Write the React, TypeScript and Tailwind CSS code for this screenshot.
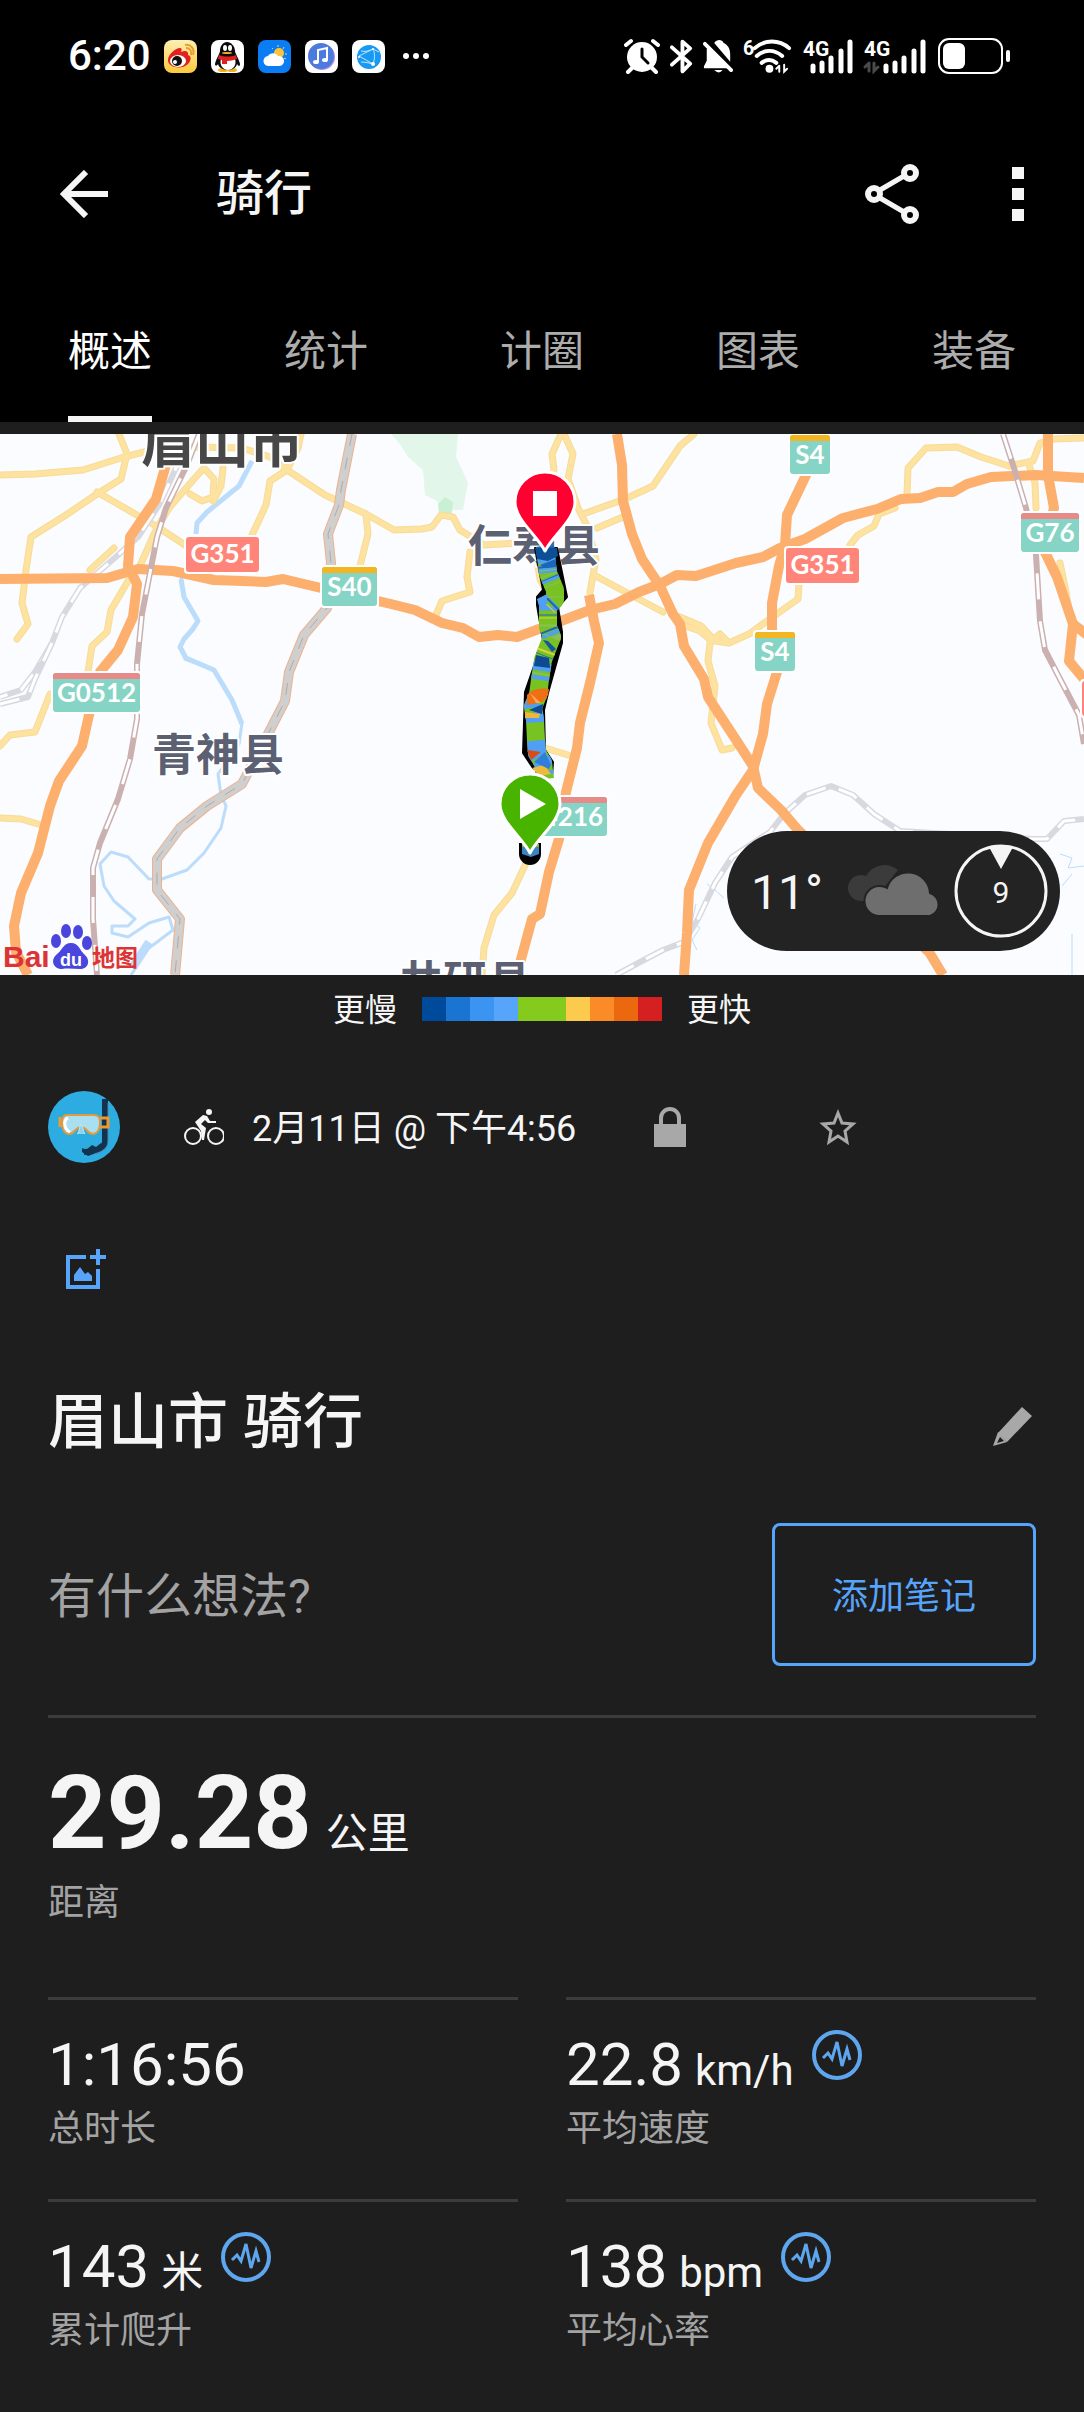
import { useState } from "react";

interface Stat {
  value: string;
  unit?: string;
  label: string;
  chart?: boolean;
}

interface Shield {
  x: number;
  y: number;
  w: number;
  text: string;
  kind: "national" | "expressway" | "provincial";
}

const FONT = "font-[Roboto,'Noto_Sans_CJK_SC',sans-serif]";

const tabs = ["概述", "统计", "计圈", "图表", "装备"];

const stats: Stat[] = [
  { value: "1:16:56", label: "总时长" },
  { value: "22.8", unit: "km/h", label: "平均速度", chart: true },
  { value: "143", unit: "米", label: "累计爬升", chart: true },
  { value: "138", unit: "bpm", label: "平均心率", chart: true },
];

// slow -> fast
const speedColors = [
  "bg-[#004a9c]",
  "bg-[#1a74d2]",
  "bg-[#3b93f2]",
  "bg-[#57a5fb]",
  "bg-[#84cb1e]",
  "bg-[#84cb1e]",
  "bg-[#fcca4c]",
  "bg-[#fb8b26]",
  "bg-[#ec680e]",
  "bg-[#d42020]",
];

/* ---------- Map data ---------- */

const highways = [
  "0,145 107,144 138,135 173,137 214,146 266,148 283,145 321,154 391,170 415,176 442,189 463,194 479,203 498,201 517,203 539,195 561,187 590,176 615,170 639,158 660,150 677,141 696,142 736,129 763,123 780,114 805,105 843,84 877,75 901,65 920,64 938,58 953,58 967,50 991,43 1036,41 1084,44",
  "170,0 165,34 156,65 130,103 128,132 137,150 133,183 118,216 100,238 89,281 82,312 59,347 50,372 38,419 21,459 14,492 16,518 28,541",
  "589,161 594,187 599,209 590,249 580,289 577,314 566,358 559,405 549,438 540,480 532,485 520,529 518,541",
  "617,0 622,31 623,67 632,100 642,125 660,152 673,180 680,190 684,212 704,245 708,263 725,289 753,332 758,354 781,376 798,396 929,518 943,541",
  "815,20 806,41 787,81 785,111 779,132 772,169 772,194 777,238 767,270 763,300 753,336 736,361 708,409 689,456 687,499 684,541",
  "1048,0 1048,41 1054,74 1043,114 1057,143 1073,190 1069,227 1084,245",
  "1073,190 1090,203",
];

const localRoads = [
  "0,41 35,40 83,36 124,23 156,15 194,13 242,14 270,23 287,36 325,61 366,80 394,96 422,95 432,93 441,81 453,83 460,96 484,111 519,109",
  "119,0 127,20 121,45 97,60 66,81 31,103 26,136 22,169 28,190 17,205",
  "97,58 156,92 185,111",
  "138,136 156,96 169,74 194,45 204,34 214,45 213,63 202,67 190,60",
  "223,34 221,52 213,67",
  "301,0 298,14 287,36 270,47 266,71 252,101",
  "366,81 368,100 360,132",
  "470,118 467,143 470,158 442,167 436,181",
  "128,147 111,176 107,198 92,212 88,238",
  "114,114 90,136",
  "50,260 35,298 10,301 0,312",
  "0,384 21,385 38,390",
  "528,425 512,459 494,481 484,514 482,541",
  "694,0 680,12 653,52 625,65 583,80",
  "623,83 597,94",
  "565,2 573,20 568,45 578,74 587,92 596,125 590,158",
  "561,0 552,20 554,36 545,60",
  "536,120 540,145 548,160",
  "594,141 618,154 663,178",
  "680,183 701,192 715,207 729,209 749,200 767,187 798,165 799,150",
  "680,190 700,197 712,207 720,200 727,207",
  "710,209 708,227 715,252 711,289 722,316 732,314",
  "850,111 858,101 874,92 879,80 895,74",
  "907,60 908,34 926,14 957,13 981,23 1009,32 1033,27 1040,9 1054,5 1084,4",
  "1029,31 1035,49 1036,74",
  "1060,129 1066,158 1071,187",
  "545,314 568,321",
];

const river =
  "181,140 183,161 197,187 180,212 185,225 214,236 232,267 242,289 239,310 218,340 221,361 226,372 221,394 204,419 187,436 162,445 149,445 128,423 111,418 100,430 104,452 114,467 135,485 128,492 112,492 112,499 128,503 149,489 169,483 173,496 149,514 131,541";

const provincialRoad =
  "352,0 341,56 339,71 328,100 331,129 327,174 304,201 289,238 285,267 268,300 242,350 207,372 180,394 157,425 157,456 180,485 175,541";

const railways = [
  "199,0 187,31 166,74 157,103 142,180 137,230 137,285 130,325 118,365 100,409 93,434 93,485 97,541",
  "1003,0 1014,34 1026,74 1036,121 1040,187 1045,216 1060,245 1079,281 1084,310",
];

const greyRailways = [
  "182,18 176,34 159,71 138,103 118,121 80,154 62,183 52,209 35,238 21,256 0,263",
  "52,209 35,245 28,263 0,270",
  "616,541 642,527 663,516 684,508 698,485 715,449 732,423 770,398 784,380 805,361 831,352 853,361 874,380 900,397 1033,405 1047,405 1064,387 1084,385",
];

const shields: Shield[] = [
  { x: 186, y: 103, w: 73, text: "G351", kind: "national" },
  { x: 322, y: 133, w: 55, text: "S40", kind: "provincial" },
  { x: 53, y: 239, w: 87, text: "G0512", kind: "expressway" },
  { x: 790, y: 1, w: 40, text: "S4", kind: "provincial" },
  { x: 786, y: 114, w: 73, text: "G351", kind: "national" },
  { x: 755, y: 198, w: 40, text: "S4", kind: "provincial" },
  { x: 1021, y: 79, w: 58, text: "G76", kind: "expressway" },
  { x: 520, y: 363, w: 87, text: "G4216", kind: "expressway" },
  { x: 1082, y: 247, w: 73, text: "", kind: "national" },
];

const places = [
  { x: 141, y: 29, size: 54, text: "眉山市", fill: "#474747" },
  { x: 152, y: 337, size: 44, text: "青神县", fill: "#5b6173" },
  { x: 468, y: 128, size: 44, text: "仁寿县", fill: "#5b6173" },
  { x: 399, y: 564, size: 44, text: "井研县", fill: "#5b6173" },
];

const track =
  "545,112 548,139 555,156 555,166 548,173 548,193 552,203 548,213 543,226 540,246 538,261 533,273 535,286 536,306 537,319 543,329 545,345";

// Pace layers painted one over another along the track
const paceLayers = [
  { color: "#78c222", dash: "none" },
  { color: "#4f9ff5", dash: "17 3 7 5 4 22 3 3 5 22 4 29 8 5 4 23 6 5 10 18" },
  { color: "#1c66b8", dash: "12 8 2 10 1 26 2 12 1 14 2 26 1 200" },
  { color: "#8abf5a", dash: "0 24 1 4 1 9 1 12 1 30 2 11 1 37 2 19 2 100" },
  { color: "#e3cf3f", dash: "0 64 1 11 1 34 2 300" },
];

const pacePatches = [
  { d: "M535 114 L557 114 L558 122 L548 127 L537 125Z", color: "#0d4f97" },
  { d: "M540 131 L556 125 L556 133 L545 134Z", color: "#1b66b5" },
  { d: "M537 165 L547 160 L547 170 L539 172Z", color: "#4f9ff5" },
  { d: "M543 206 L548 207 L556 215 L552 218Z", color: "#14569f" },
  { d: "M536 221 L549 224 L550 234 L534 232Z", color: "#0e4a93" },
  { d: "M527 261 Q534 253 549 255 L548 261 Q544 268 539 269 L527 271Z", color: "#ee6f14" },
  { d: "M530 259 L541 269 L536 269Z", color: "#fbaa4a" },
  { d: "M543 270 L542 280 L529 276Z", color: "#0f4c94" },
  { d: "M525 278 L540 280 L539 284 L525 284Z", color: "#f2b53a" },
  { d: "M527 316 L541 318 L531 326Z", color: "#dd4a12" },
  { d: "M532 334 L544 331 L551 340 L540 342Z", color: "#eeb93c" },
  { d: "M534 328 L545 318 L551 331 L549 335Z", color: "#2f7fd8" },
];

function RoadShield({ x, y, w, text, kind }: Shield) {
  const national = kind === "national";
  const h = national ? 35 : 39;
  return (
    <g>
      <rect x={x - 2} y={y - 2} width={w + 4} height={h + 4} rx="4" fill="#fff" />
      <rect x={x} y={y} width={w} height={h} rx="3" fill={national ? "#ff857a" : "#86d4c5"} />
      {!national && (
        <path
          d={`M${x} ${y + 6}v-3q0-3 3-3h${w - 6}q3 0 3 3v3z`}
          fill={kind === "provincial" ? "#f4b523" : "#e78b88"}
        />
      )}
      <text
        x={x + w / 2}
        y={national ? y + 26 : y + 29}
        textAnchor="middle"
        fontSize="26"
        fontWeight="700"
        fontFamily="Lato, sans-serif"
        fill="#fff"
      >
        {text}
      </text>
    </g>
  );
}

function RouteMap() {
  return (
    <svg
      viewBox="0 0 1084 541"
      preserveAspectRatio="xMidYMid slice"
      className="w-full h-[541px] bg-[#fbfcff]"
      role="img"
      aria-label="路线地图"
      strokeLinejoin="round"
      fill="none"
    >
      <path
        d="M391 0 400 10 408 23 423 36 425 61 437 67 441 76 463 76 468 49 463 38 456 23 458 0Z"
        fill="#e2f6e9"
      />
      <path d="M438 70 445 63 453 68 452 79 439 80Z" fill="#c9f0d4" />

      <g stroke="#bbdcfb">
        <polyline points="252,27 239,52 207,78 197,89 196,100" strokeWidth="5" />
        <polyline points={river} strokeWidth="3" />
        <path d="M181 145l3 18 14 24-5 8-9 10-4 8 6 11 28 12 18 30 10 24" strokeWidth="5" />
        <path d="M149 508l-17 26" strokeWidth="8" />
        <path d="M707 450l8 6 9 8M696 470l-4 18 8 6-8 12 5 10M1060 420l12 4-4 10 16-2M1072 440l-10 12M1072 500v41" strokeWidth="1" />
      </g>

      {localRoads.map((points) => (
        <polyline key={points} points={points} stroke="#f7dc98" strokeWidth="7" strokeLinecap="round" />
      ))}
      {localRoads.map((points) => (
        <polyline key={points} points={points} stroke="#fde2a0" strokeWidth="5" strokeLinecap="round" />
      ))}

      {greyRailways.map((points) => (
        <g key={points}>
          <polyline points={points} stroke="#d8d8e0" strokeWidth="6" />
          <polyline points={points} stroke="#fff" strokeWidth="3" strokeDasharray="20 14" />
        </g>
      ))}

      {highways.map((points) => (
        <polyline key={points} points={points} stroke="#fdaf6e" strokeWidth="10" />
      ))}

      {railways.map((points) => (
        <g key={points}>
          <polyline points={points} stroke="#cbb0b0" strokeWidth="6" />
          <polyline points={points} stroke="#fff" strokeWidth="3" strokeDasharray="26 22" />
        </g>
      ))}

      <polyline points={provincialRoad} stroke="#eeb28c" strokeWidth="10" />
      <polyline points={provincialRoad} stroke="#cfcfcf" strokeWidth="8" />
      <polyline points={provincialRoad} stroke="#b5a9a2" strokeWidth="1" strokeDasharray="12 12" />

      {shields.map((shield) => (
        <RoadShield key={`${shield.x}-${shield.y}`} {...shield} />
      ))}

      {places.map((place) => (
        <text
          key={place.text}
          x={place.x}
          y={place.y}
          fontSize={place.size}
          fontWeight="700"
          fontFamily="'Noto Sans CJK SC', sans-serif"
          fill={place.fill}
          stroke="#fff"
          strokeWidth="4"
          paintOrder="stroke"
        >
          {place.text}
        </text>
      ))}

      {/* Recorded track */}
      <path
        d="M535 114 543 156 537 163 537 171 543 206 525 258 523 319 533 334 552 343 553 328 545 316 544 276 548 259 562 209 562 198 558 173 567 163 557 114Z"
        fill="#000"
        stroke="#000"
        strokeWidth="2"
      />
      {paceLayers.map((layer) => (
        <polyline
          key={layer.color}
          points={track}
          stroke={layer.color}
          strokeWidth="18"
          strokeDasharray={layer.dash}
        />
      ))}
      {pacePatches.map((patch) => (
        <path key={patch.d} d={patch.d} fill={patch.color} />
      ))}
      <path d="M519 409h22v11a11 11 0 0 1-22 0z" fill="#000" />
      <path d="M522 410h17v10l-8 3-9-3z" fill="#3a83c4" />
      <path d="M522 410h17v3h-17z" fill="#8cb03a" />

      {/* Finish pin */}
      <path
        d="M545 117C538 102 515 86 515 68a30 30 0 0 1 60 0C575 86 552 102 545 117z"
        fill="#ff0030"
        stroke="#fff"
        strokeWidth="3"
      />
      <rect x="533" y="57" width="24" height="25" fill="#fff" />

      {/* Start pin */}
      <path
        d="M530 419C523 404 500 388 500 370a30 30 0 0 1 60 0C560 388 537 404 530 419z"
        fill="#49b400"
        stroke="#fff"
        strokeWidth="3"
      />
      <path d="M520 355v30l26-15z" fill="#fff" />

      {/* Map provider */}
      <g fontFamily="'Liberation Sans', 'Noto Sans CJK SC', sans-serif" fontWeight="700">
        <text x="3" y="533" fontSize="30" fill="#dc3434">Bai</text>
        <g fill="#4a45dd">
          <ellipse cx="56" cy="507" rx="5" ry="7" />
          <ellipse cx="66" cy="497" rx="5" ry="7" />
          <ellipse cx="78" cy="498" rx="5" ry="7" />
          <ellipse cx="87" cy="509" rx="5" ry="7" />
          <path d="M71 509c8 0 9 8 14 12 6 6 3 14-5 14-6 0-12-1-18 0-8 0-12-8-6-14 6-4 7-12 15-12z" />
        </g>
        <text x="60" y="532" fontSize="18" fill="#fff">du</text>
        <text x="92" y="532" fontSize="23" fill="#dc3434">地图</text>
      </g>
    </svg>
  );
}

function WeatherPill() {
  return (
    <div className="absolute right-6 bottom-6 h-[120px] w-[333px] rounded-full bg-[#232323] flex items-center justify-between pl-6 pr-3 text-[#f5f5f5]">
      <span className="text-5xl pt-1">11°</span>
      <svg width="94" height="54" viewBox="0 0 94 54" className="ml-3" aria-hidden="true">
        <path
          d="M14 37a13 13 0 1 1 5-25A21 21 0 0 1 51 6L40 20 24 37z"
          fill="#3b3b3b"
        />
        <path
          d="M33 52a15 15 0 0 1-1-30 14 14 0 0 1 8 2 22 22 0 0 1 43 5 12 12 0 0 1 0 23z"
          fill="#6e6e6e"
          stroke="#232323"
          strokeWidth="2"
        />
      </svg>
      <svg width="94" height="94" viewBox="0 0 94 94" role="img" aria-label="风速 9">
        <circle cx="47" cy="47" r="45" fill="none" stroke="#f5f5f5" strokeWidth="3" />
        <path d="M35 3h24L47 25z" fill="#f5f5f5" />
        <text x="47" y="59" textAnchor="middle" fontSize="30" fill="#f5f5f5">9</text>
      </svg>
    </div>
  );
}

/* ---------- Status bar ---------- */

function AppIcons() {
  return (
    <div className="flex gap-[14px]" aria-hidden="true">
      <svg width="33" height="33" viewBox="0 0 33 33">
        <defs>
          <linearGradient id="weibo" x1="0" y1="0" x2="0" y2="1">
            <stop offset="0" stopColor="#fdf0b4" />
            <stop offset="1" stopColor="#fdc93a" />
          </linearGradient>
        </defs>
        <rect width="33" height="33" rx="8" fill="url(#weibo)" />
        <path d="M4 20c0-5 7-12 12-12 2 0 2 2 1 4 4-2 8-1 7 3 4 1 3 6 0 9-6 6-20 4-20-4z" fill="#e2201f" />
        <ellipse cx="14" cy="21" rx="8" ry="6" fill="#fff" />
        <circle cx="13" cy="21" r="5" fill="#111" />
        <circle cx="11" cy="22" r="2" fill="#fff" />
        <path d="M22 8c4 0 6 3 5 7M21 5c6-1 10 4 8 10" fill="none" stroke="#e9a12c" strokeWidth="2" />
      </svg>
      <svg width="33" height="33" viewBox="0 0 33 33">
        <rect width="33" height="33" rx="8" fill="#fff" />
        <ellipse cx="12" cy="30" rx="5" ry="2" fill="#f6b01e" />
        <ellipse cx="21" cy="30" rx="5" ry="2" fill="#f6b01e" />
        <path d="M9 11c0-5 3-9 7-9s8 4 8 9c0 2 4 8 5 13 0 3-2 2-3 0-1 4-5 6-9 6s-9-2-10-6c-1 2-3 2-3 0 1-5 5-11 5-13z" fill="#0b0b0b" />
        <path d="M10 19h14c2 6-2 11-7 11s-9-5-7-11z" fill="#fff" />
        <path d="M8 15c5 2 12 2 17 0l1 4c-3 1-7 2-10 2v3h-5v-4l-4-1z" fill="#e2201f" />
        <ellipse cx="14" cy="8" rx="2" ry="3" fill="#fff" />
        <ellipse cx="19" cy="8" rx="2" ry="3" fill="#fff" />
        <ellipse cx="16" cy="13" rx="5" ry="1" fill="#f6b01e" />
      </svg>
      <svg width="33" height="33" viewBox="0 0 33 33">
        <rect width="33" height="33" rx="8" fill="#0a7df5" />
        <circle cx="21" cy="13" r="5" fill="#fcc43a" />
        <path d="M20 5v2M14 8l1 1M26 7l-1 2M27 14h2M26 18l2 1" stroke="#fcd46a" strokeWidth="1" />
        <path d="M11 26a5 5 0 0 1-1-10 6 6 0 0 1 10 0 5 5 0 0 1 2 10z" fill="#fff" />
      </svg>
      <svg width="33" height="33" viewBox="0 0 33 33">
        <rect width="33" height="33" rx="8" fill="#fff" />
        <circle cx="17" cy="17" r="13" fill="#b28be8" />
        <circle cx="16" cy="16" r="13" fill="#4b7bdc" />
        <path d="M13 22V10l9-2v12" fill="none" stroke="#fff" strokeWidth="2" />
        <ellipse cx="11" cy="22" rx="3" ry="2" fill="#fff" />
        <ellipse cx="20" cy="20" rx="3" ry="2" fill="#fff" />
      </svg>
      <svg width="33" height="33" viewBox="0 0 33 33">
        <rect width="33" height="33" rx="8" fill="#fff" />
        <circle cx="17" cy="17" r="12" fill="#1899f3" />
        <path d="M21 9 7 16l14 8M21 9c2 4 2 10 0 15M9 11c4 1 8 0 12-2M9 22c4 0 8 1 12 2M21 9l6 3" fill="none" stroke="#bfe6ff" strokeWidth="1" />
        <circle cx="21" cy="9" r="1" fill="#fff" />
        <circle cx="7" cy="17" r="1" fill="#fff" />
        <circle cx="21" cy="24" r="2" fill="#fff" />
      </svg>
    </div>
  );
}

function Signal({ data }: { data?: boolean }) {
  return (
    <svg
      width={data ? 63 : 52}
      height="38"
      viewBox={data ? "-11 0 63 38" : "0 0 52 38"}
      className="overflow-visible"
      fill="none"
      stroke="#fff"
      strokeWidth="5"
      strokeLinecap="round"
    >
      <text
        x={data ? -11 : 1}
        y="19"
        fontSize="21"
        fontWeight="700"
        fontFamily="Roboto, sans-serif"
        fill="#fff"
        stroke="none"
      >
        4G
      </text>
      <path d="M11 29v5M20 26v8M29 21v13M39 14v20M48 5v29" />
      {data && (
        <path d="M-6 26v8M-6 26l-4 4M-1 26v8l4-4" stroke="#4a4a4a" strokeWidth="3" />
      )}
    </svg>
  );
}

function StatusBar() {
  return (
    <div className="h-28 pl-[68px] pr-[73px] flex items-center justify-between text-white">
      <div className="flex items-center">
        <span className="text-[42px] leading-none font-medium mr-[13px]">6:20</span>
        <AppIcons />
        <svg width="28" height="8" viewBox="0 0 28 8" className="ml-[17px]" fill="#fff" aria-hidden="true">
          <circle cx="4" cy="4" r="3" />
          <circle cx="14" cy="4" r="3" />
          <circle cx="24" cy="4" r="3" />
        </svg>
      </div>

      <div className="flex items-center gap-[10px]" aria-hidden="true">
        <svg width="36" height="36" viewBox="0 0 36 36" fill="none" stroke="#fff" strokeWidth="4" strokeLinecap="round">
          <circle cx="18" cy="19" r="15" fill="#fff" stroke="none" />
          <path d="M2 7l5-4M34 7l-5-4M8 30l-4 4M28 30l4 4" />
          <path d="M18 11v8l6 6" stroke="#000" strokeWidth="3" />
        </svg>
        <svg width="23" height="36" viewBox="0 0 24 36" fill="none" stroke="#fff" strokeWidth="4" strokeLinecap="round" strokeLinejoin="round">
          <path d="M2 9l19 17-8 8V3l8 7L2 27" />
        </svg>
        <svg width="30" height="36" viewBox="0 0 32 36">
          <path d="M4 11v12l-3 6v2h30L6 6zM12 4c3-4 8-4 10 0 5 2 7 7 7 12v8z" fill="#fff" />
          <path d="M12 33h9q-4 5-9 0z" fill="#fff" />
          <path d="M4 3l28 28" stroke="#000" strokeWidth="4" />
          <path d="M2 5l28 28" stroke="#fff" strokeWidth="4" strokeLinecap="round" />
        </svg>
        <svg width="49" height="38" viewBox="0 0 50 38" fill="none" stroke="#fff" strokeWidth="4" strokeLinecap="round" className="overflow-visible">
          <text x="0" y="18" fontSize="20" fontWeight="700" fill="#fff" stroke="none">6</text>
          <path d="M12 11c10-9 25-9 35 0M14 19c8-7 18-7 26 0M19 26c5-4 10-4 15 0" />
          <circle cx="27" cy="32" r="4" fill="#fff" stroke="none" />
          <path d="M37 29v6M37 29l-3 3M42 28v7l3-3" strokeWidth="2" />
        </svg>
        <Signal />
        <Signal data />
        <svg width="74" height="38" viewBox="0 0 74 38">
          <rect x="2" y="2" width="63" height="34" rx="10" fill="none" stroke="#fff" strokeWidth="2" />
          <rect x="6" y="6" width="22" height="26" rx="6" fill="#fff" />
          <rect x="69" y="13" width="4" height="12" rx="2" fill="#fff" />
        </svg>
      </div>
    </div>
  );
}

/* ---------- Icons ---------- */

function ChartBadge() {
  return (
    <svg width="50" height="50" viewBox="0 0 50 50" fill="none" stroke="#5ea6ee" aria-hidden="true">
      <circle cx="25" cy="25" r="23" strokeWidth="4" />
      <path d="M11 28l5-5 4 6 5-17 5 24 5-17 3 11" strokeWidth="3" />
    </svg>
  );
}

function Avatar() {
  return (
    <svg width="72" height="72" viewBox="0 0 72 72" role="img" aria-label="头像">
      <circle cx="36" cy="36" r="36" fill="#2dace2" />
      <path d="M57 8v42c0 8-8 10-21 11" fill="none" stroke="#12324e" strokeWidth="6" />
      <path d="M34 57l4 2 6-5 4 2 5-4 3 4-5 5-11 4-6-4z" fill="#12324e" />
      <path d="M60 12v38c0 7-6 11-14 13" fill="none" stroke="#4d87a8" strokeWidth="1" />
      <path d="M12 26v10M52 27h8v9h-8" fill="none" stroke="#ee9a2e" strokeWidth="3" />
      <path
        d="M19 24h27c5 0 6 3 6 8s-2 11-7 11c-6 0-6-7-12-7s-6 7-12 7c-5 0-7-6-7-11s1-8 5-8z"
        fill="#a9dff0"
        stroke="#e39a3c"
        strokeWidth="2"
      />
      <path d="M20 27c-5 2-4 11 2 14" fill="none" stroke="#fff" strokeWidth="3" />
      <path d="M29 43c3-2 2-9 4-9s2 7 4 9" fill="#8fd3ee" stroke="#c6ecf8" strokeWidth="1" />
    </svg>
  );
}

function StatCell({ value, unit, label, chart }: Stat) {
  return (
    <div className="border-t-3 border-[#3c3c3c] pt-[30px] pb-[46px]">
      <div className="flex items-end h-[65px]">
        <p className="text-6xl leading-[60px]">
          {value}
          {unit && <span className="text-[42px] leading-none ml-3">{unit}</span>}
        </p>
        {chart && (
          <button className="self-start ml-[18px]" aria-label={`${label}图表`}>
            <ChartBadge />
          </button>
        )}
      </div>
      <p className="text-4xl leading-12 mt-[10px] text-[#a3a3a3]">{label}</p>
    </div>
  );
}

export default function App() {
  const [activeTab, setActiveTab] = useState("概述");

  return (
    <div className={`${FONT} min-h-screen bg-[#1e1e1e] text-[#f5f5f5]`} lang="zh-CN">
      <header className="bg-black">
        <StatusBar />

        <div className="h-[164px] pl-[60px] pr-[60px] flex items-center">
          <button aria-label="返回">
            <svg width="48" height="48" viewBox="0 0 48 48" fill="none" stroke="#f5f5f5" strokeWidth="6">
              <path d="M48 24H5M26 2L4 24l22 22" />
            </svg>
          </button>
          <h1 className="ml-[108px] text-5xl leading-none font-medium">骑行</h1>
          <button className="ml-auto" aria-label="分享">
            <svg width="54" height="60" viewBox="0 0 54 60" fill="none" stroke="#f5f5f5" strokeWidth="6">
              <path d="M15 26l24-14M15 34l24 14" strokeWidth="5" />
              <circle cx="9" cy="30" r="6" />
              <circle cx="45" cy="9" r="6" />
              <circle cx="45" cy="51" r="6" />
            </svg>
          </button>
          <button className="ml-[93px]" aria-label="更多">
            <svg width="12" height="54" viewBox="0 0 12 54" fill="#f5f5f5">
              <path d="M0 0h12v12H0zM0 21h12v12H0zM0 42h12v12H0z" />
            </svg>
          </button>
        </div>

        <nav className="h-[146px] px-0.5 grid grid-cols-5 justify-items-center" role="tablist">
          {tabs.map((tab) => (
            <button
              key={tab}
              role="tab"
              aria-selected={tab === activeTab}
              onClick={() => setActiveTab(tab)}
              className={`h-full pt-3 text-[42px] leading-none border-b-6 ${
                tab === activeTab ? "text-white border-b-[#f5f5f5]" : "text-[#acacac] border-b-transparent"
              }`}
            >
              {tab}
            </button>
          ))}
        </nav>
      </header>

      <section className="mt-3 relative">
        <RouteMap />
        <WeatherPill />
      </section>

      {/* Speed legend */}
      <div className="h-[68px] flex items-center justify-center gap-[25px] text-[32px] leading-none">
        <span className="pt-0.5">更慢</span>
        <div className="flex">
          {speedColors.map((color, i) => (
            <div key={i} className={`w-6 h-6 ${color}`} />
          ))}
        </div>
        <span className="pt-0.5">更快</span>
      </div>

      <main className="px-12 pt-12">
        <div className="flex items-center">
          <Avatar />
          <svg width="40" height="36" viewBox="0 0 40 36" className="ml-16" fill="none" stroke="#f5f5f5" aria-hidden="true">
            <circle cx="9" cy="27" r="8" strokeWidth="2" />
            <circle cx="32" cy="27" r="8" strokeWidth="2" />
            <circle cx="25" cy="3" r="3" fill="#f5f5f5" stroke="none" />
            <path d="M11 13l8-7 4 1 3 5h6v2h-8l-3-3-4 4 5 4-2 12h-2l-1-9z" fill="#f5f5f5" stroke="none" />
          </svg>
          <p className="ml-7 pt-1 text-4xl">2月11日 @ 下午4:56</p>
          <svg width="32" height="40" viewBox="0 0 32 40" className="ml-[78px]" aria-hidden="true">
            <path d="M7 20V11a9 9 0 0 1 18 0v9" fill="none" stroke="#a8a8a8" strokeWidth="4" />
            <path d="M0 17h32v23H0z" fill="#a8a8a8" />
          </svg>
          <button className="ml-[133px]" aria-label="收藏">
            <svg width="38" height="38" viewBox="0 0 38 38" fill="none" stroke="#a8a8a8" strokeWidth="3">
              <path d="M19 5l4 10 11 1-8 7 2 11-9-6-9 6 2-11-8-7 11-1z" />
            </svg>
          </button>
        </div>

        <button className="block mt-[86px] ml-[18px]" aria-label="添加照片">
          <svg width="40" height="40" viewBox="0 0 40 40" fill="none" stroke="#57a5fb" strokeWidth="4">
            <path d="M20 8H2v30h30V20M32 0v16M24 8h16" />
            <path d="M8 32V26l6-8 5 7 3-2 4 4v5z" fill="#57a5fb" stroke="none" />
          </svg>
        </button>

        <div className="mt-[98px] flex items-end justify-between">
          <h2 className="text-6xl leading-[72px] font-medium">眉山市 骑行</h2>
          <button className="mb-3 mr-1" aria-label="编辑名称">
            <svg width="40" height="40" viewBox="0 0 40 40" fill="#a8a8a8">
              <path d="M30 0l10 9-25 26-9-9z" />
              <path d="M6 25l9 10L1 39zM8 30L5 36l7-2z" fillRule="evenodd" />
            </svg>
          </button>
        </div>

        <div className="mt-16 flex items-center justify-between">
          <p className="pt-1 text-5xl text-[#a3a3a3]">有什么想法?</p>
          <button className="h-[143px] w-[264px] pt-1 rounded-lg border-3 border-[#57a5fb] text-4xl text-[#57a5fb]">
            添加笔记
          </button>
        </div>

        <div className="mt-[49px] border-t-3 border-[#3c3c3c] pt-11 pb-[70px]">
          <p className="text-[102px] leading-[103px] font-bold">
            29.28
            <span className="text-[42px] leading-none font-normal ml-[14px]">公里</span>
          </p>
          <p className="text-4xl leading-12 mt-[14px] text-[#a3a3a3]">距离</p>
        </div>

        <div className="grid grid-cols-2 gap-x-12">
          {stats.map((stat) => (
            <StatCell key={stat.label} {...stat} />
          ))}
        </div>
      </main>
    </div>
  );
}
